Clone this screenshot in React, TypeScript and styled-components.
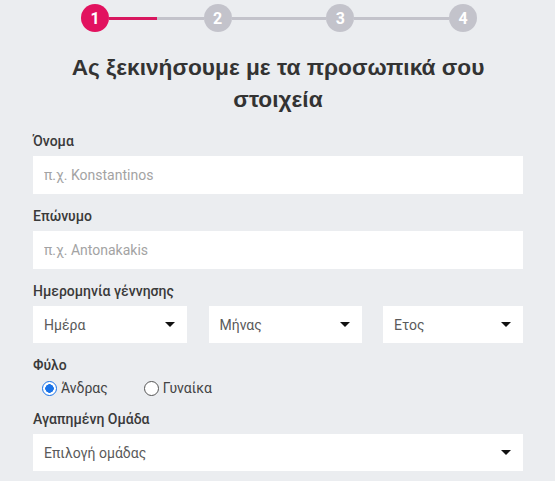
import styled, { createGlobalStyle } from 'styled-components'

const GlobalStyle = createGlobalStyle`
  html, body {
    margin: 0;
    padding: 0;
    background: #ebedf0;
  }
  body {
    font-family: Roboto, "Noto Sans", "Liberation Sans", sans-serif;
    color: #333;
  }
  * {
    box-sizing: border-box;
  }
`;

const steps = [1, 2, 3, 4];

function Caret() {
  return (
    <svg width="10" height="5" viewBox="0 0 10 5">
      <path d="M0 0 L10 0 L5 5 Z" fill="#111" />
    </svg>
  );
}

function App() {
  return (
    <Wrap>
      <GlobalStyle />
      <Stepper>
        {steps.map((s, i) => (
          <StepGroup key={s} $last={i === steps.length - 1}>
            <StepDot $active={s === 1}>{s}</StepDot>
            {i < steps.length - 1 && <StepLine $progress={i === 0 ? 51 : 0} />}
          </StepGroup>
        ))}
      </Stepper>

      <Title>Ας ξεκινήσουμε με τα προσωπικά σου στοιχεία</Title>

      <Form>
        <Field>
          <Label>Όνομα</Label>
          <Input placeholder="π.χ. Konstantinos" />
        </Field>
        <Field>
          <Label>Επώνυμο</Label>
          <Input placeholder="π.χ. Antonakakis" />
        </Field>
        <Field>
          <Label>Ημερομηνία γέννησης</Label>
          <DateRow>
            <Select>
              <span>Ημέρα</span>
              <Caret />
            </Select>
            <Select>
              <span>Μήνας</span>
              <Caret />
            </Select>
            <Select>
              <span>Ετος</span>
              <Caret />
            </Select>
          </DateRow>
        </Field>
        <Field>
          <Label>Φύλο</Label>
          <RadioRow>
            <RadioOption>
              <Radio $checked />
              Άνδρας
            </RadioOption>
            <RadioOption>
              <Radio />
              Γυναίκα
            </RadioOption>
          </RadioRow>
        </Field>
        <Field>
          <Label>Αγαπημένη Ομάδα</Label>
          <Select>
            <span>Επιλογή ομάδας</span>
            <Caret />
          </Select>
        </Field>
      </Form>
    </Wrap>
  )
}

const Wrap = styled.div`
  width: 555px;
  min-height: 481px;
  padding: 4px 32px 0 33px;
`;

const Stepper = styled.div`
  display: flex;
  align-items: center;
  margin: 0 46px 0 48px;
`;

const StepGroup = styled.div<{ $last: boolean }>`
  display: flex;
  align-items: center;
  flex: ${p => (p.$last ? '0 0 auto' : '1')};
`;

const StepDot = styled.div<{ $active: boolean }>`
  width: 28px;
  height: 28px;
  border-radius: 50%;
  flex: none;
  display: flex;
  align-items: center;
  justify-content: center;
  background: ${p => (p.$active ? '#e2125f' : '#c3c3cb')};
  color: #fff;
  font-weight: 700;
  font-size: 16px;
`;

const StepLine = styled.div<{ $progress: number }>`
  flex: 1;
  height: 3px;
  background: linear-gradient(
    to right,
    #d8175f 0%,
    #d8175f ${p => p.$progress}%,
    #c3c3cb ${p => p.$progress}%,
    #c3c3cb 100%
  );
`;

const Title = styled.h1`
  margin: 19px 30px 0;
  text-align: center;
  font-family: "Liberation Sans", Arial, sans-serif;
  font-size: 22.7px;
  line-height: 32px;
  font-weight: 700;
  color: #333;
`;

const Form = styled.div`
  display: flex;
  flex-direction: column;
  gap: 14px;
  margin-top: 18px;
`;

const Field = styled.div`
  display: flex;
  flex-direction: column;
  gap: 7px;
`;

const Label = styled.label`
  font-size: 14px;
  line-height: 16px;
  font-weight: 500;
  color: #3a3a3a;
`;

const Input = styled.input`
  height: 38px;
  border: none;
  outline: none;
  background: #fff;
  padding: 0 11px;
  font-family: inherit;
  font-size: 14px;
  color: #333;

  &::placeholder {
    color: #a3a3a3;
  }
`;

const DateRow = styled.div`
  display: grid;
  grid-template-columns: 154px 153px 140px;
  justify-content: space-between;
`;

const Select = styled.div`
  height: 37px;
  background: #fff;
  display: flex;
  align-items: center;
  justify-content: space-between;
  padding: 0 12px 0 11px;
  font-size: 14px;
  color: #5a5a5a;
`;

const RadioRow = styled.div`
  display: flex;
  gap: 36px;
  padding-left: 9px;
  margin-top: -1px;
`;

const RadioOption = styled.div`
  display: flex;
  align-items: center;
  gap: 4px;
  font-size: 14px;
  line-height: 18px;
  color: #444;
`;

const Radio = styled.span<{ $checked?: boolean }>`
  width: 15px;
  height: 15px;
  border-radius: 50%;
  border: 1.5px solid ${p => (p.$checked ? '#1a73e8' : '#555')};
  background: ${p => (p.$checked ? 'radial-gradient(circle, #1a73e8 0 4px, #fff 4.5px)' : '#fff')};
`;

export default App
